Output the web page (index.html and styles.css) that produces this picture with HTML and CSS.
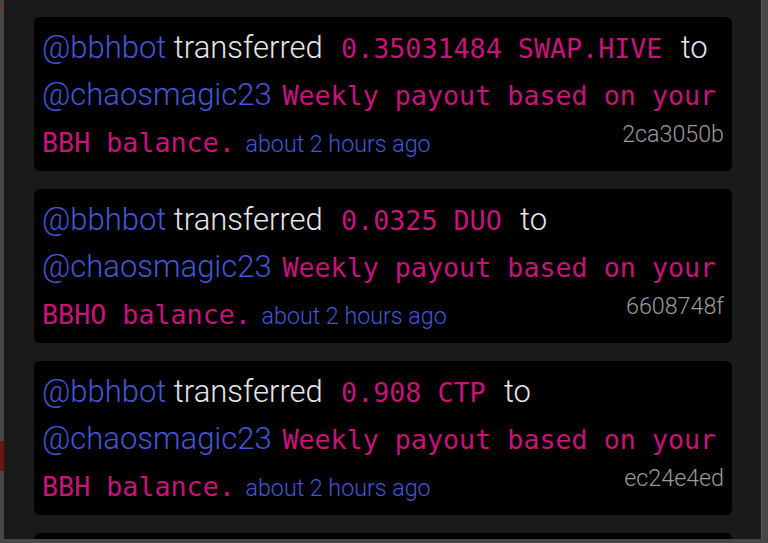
FILE: index.html
```html
<!DOCTYPE html>
<html>
    <head>
        <meta charset="utf-8">
        <title>Transfers</title>
        <link rel="stylesheet" href="styles.css">
    </head>
    <body>
        <div class="fundo">
            <div class="faixa">
                <div class="linhaVermelha"></div>
                <div class="blocoVermelho"></div>
            </div>
            <div class="modal">
                <div class="cartao">
                    <span class="conta">@bbhbot</span> transferred <code class="valor">0.35031484 SWAP.HIVE</code> to
                    <span class="conta">@chaosmagic23</span><code class="valor">Weekly payout based on your BBH balance.</code><span class="tempo">about 2 hours ago</span><span class="hash">2ca3050b</span>
                </div>
                <div class="cartao">
                    <span class="conta">@bbhbot</span> transferred <code class="valor">0.0325 DUO</code> to
                    <span class="conta">@chaosmagic23</span><code class="valor">Weekly payout based on your BBHO balance.</code><span class="tempo">about 2 hours ago</span><span class="hash">6608748f</span>
                </div>
                <div class="cartao">
                    <span class="conta">@bbhbot</span> transferred <code class="valor">0.908 CTP</code> to
                    <span class="conta">@chaosmagic23</span><code class="valor">Weekly payout based on your BBH balance.</code><span class="tempo">about 2 hours ago</span><span class="hash">ec24e4ed</span>
                </div>
                <div class="cartao"></div>
            </div>
            <div class="barra"></div>
        </div>
    </body>
</html>
```

FILE: styles.css
```css
body {
    margin: 0;
    background-color: #474747;
    font-family: Roboto, "Liberation Sans", sans-serif;
    overflow: hidden;
}
.fundo {
    display: flex;
    height: 543px;
}
.faixa {
    width: 4px;
    flex-shrink: 0;
    padding-top: 4px;
}
.linhaVermelha {
    height: 2px;
    background-color: #8b1f1f;
}
.blocoVermelho {
    height: 30px;
    margin-top: 435px;
    background-color: #6e1414;
}
.modal {
    width: 757px;
    height: 539px;
    flex-shrink: 0;
    box-sizing: border-box;
    padding: 17px 29px 0 30px;
    background-color: #1a1a1a;
    overflow: hidden;
}
.barra {
    width: 7px;
    height: 539px;
    border-left: 1px solid #5a5a5a;
    box-sizing: border-box;
}
.cartao {
    background-color: #000;
    border-radius: 6px;
    padding: 8px;
    margin-bottom: 18px;
    color: #e6e6e6;
    font-size: 31px;
    font-weight: 300;
    line-height: 46px;
    height: 138px;
}
.conta {
    color: #4356d6;
}
.valor {
    color: #c8137a;
    font-family: "DejaVu Sans Mono", "Liberation Mono", monospace;
    font-size: 26.7px;
    font-weight: normal;
    padding: 0 0.4em;
}
.tempo {
    color: #4356d6;
    font-size: 23.25px;
}
.hash {
    float: right;
    color: #9a9a9a;
    font-size: 23.25px;
    line-height: 30px;
}
```
